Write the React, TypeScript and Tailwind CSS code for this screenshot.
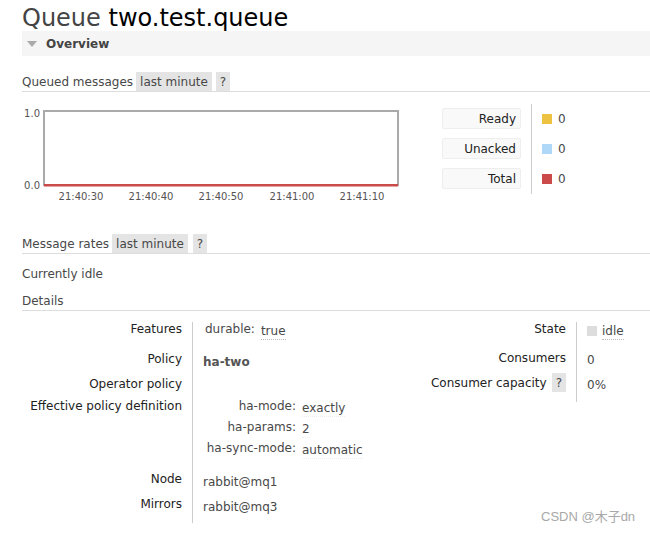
import React from "react";

function Chart() {
  const xs = [
    { x: 59, t: "21:40:30" },
    { x: 129, t: "21:40:40" },
    { x: 199, t: "21:40:50" },
    { x: 270, t: "21:41:00" },
    { x: 340, t: "21:41:10" },
  ];
  return (
    <svg width="390" height="100" viewBox="0 0 390 100" className="block shrink-0">
      <rect x="22" y="7" width="354" height="74" fill="#fff" stroke="#aaa" strokeWidth="2" />
      <rect x="22" y="80" width="354" height="2.5" fill="#cb4b4b" />
      <g fontFamily="DejaVu Sans, sans-serif" fontSize="10" fill="#545454">
        <text x="18" y="10" textAnchor="end" dominantBaseline="middle">1.0</text>
        <text x="18" y="82" textAnchor="end" dominantBaseline="middle">0.0</text>
        {xs.map((l) => (
          <text key={l.t} x={l.x} y="93" textAnchor="middle" dominantBaseline="middle">
            {l.t}
          </text>
        ))}
      </g>
    </svg>
  );
}

function LegendBox({ label }: { label: string }) {
  return (
    <div className="h-[21px] w-[79px] bg-[#f9f9f9] border border-[#eee] rounded-[2px] flex items-center justify-end pr-[4px] text-[#222]">
      {label}
    </div>
  );
}

function LegendVal({ color }: { color: string }) {
  return (
    <div className="h-[21px] flex items-center gap-[6px]">
      <span className={`w-[10px] h-[10px] ${color}`} />
      <span>0</span>
    </div>
  );
}

export default function App() {
  return (
    <div className="w-[650px] h-[533px] bg-white overflow-hidden relative text-[12px] leading-[14px] text-[#484848] font-['DejaVu_Sans',sans-serif]">
      <h1 className="pl-[22px] pt-[6px] h-[31px] text-[24px] leading-[24px] font-normal text-[#444]">
        Queue <span className="text-black">two.test.queue</span>
      </h1>
      <div className="ml-[22px] h-[25px] bg-[#f5f5f5] flex items-center">
        <span className="ml-[5px] w-0 h-0 border-l-[5px] border-r-[5px] border-t-[6px] border-l-transparent border-r-transparent border-t-[#aaa]" />
        <span className="ml-[9px] font-bold text-[#444]">Overview</span>
      </div>

      <div className="mt-[16px]">
        <div className="ml-[22px] h-[20px] border-b border-[#ddd] flex items-start">
          <span className="h-[19px] leading-[20px]">Queued messages</span>
          <span className="ml-[3px] h-[19px] leading-[20px] px-[4px] bg-[#e4e4e4]">last minute</span>
          <span className="ml-[4px] h-[19px] leading-[20px] px-[4px] bg-[#e4e4e4]">?</span>
        </div>
      </div>

      <div className="ml-[22px] mt-[12px] flex">
        <Chart />
        <div className="ml-[30px] flex">
          <div className="pt-[4px] flex flex-col gap-[9px]">
            <LegendBox label="Ready" />
            <LegendBox label="Unacked" />
            <LegendBox label="Total" />
          </div>
          <div className="ml-[10px] h-[90px] border-l border-[#ccc] pl-[10px] pt-[4px] flex flex-col gap-[9px]">
            <LegendVal color="bg-[#edc240]" />
            <LegendVal color="bg-[#afd8f8]" />
            <LegendVal color="bg-[#cb4b4b]" />
          </div>
        </div>
      </div>

      <div className="mt-[30px]">
        <div className="ml-[22px] h-[20px] border-b border-[#ddd] flex items-start">
          <span className="h-[19px] leading-[20px]">Message rates</span>
          <span className="ml-[3px] h-[19px] leading-[20px] px-[4px] bg-[#e4e4e4]">last minute</span>
          <span className="ml-[5px] h-[19px] leading-[20px] px-[4px] bg-[#e4e4e4]">?</span>
        </div>
      </div>

      <div className="ml-[22px] mt-[13px] h-[14px] leading-[15px]">Currently idle</div>
      <div className="ml-[22px] mt-[12px] h-[18px] leading-[17px] border-b border-[#ddd]">Details</div>

      <div className="ml-[22px] mt-[11px] flex">
        {/* left table */}
        <div className="w-[400px] flex">
          <div className="w-[160px] text-right text-[#222] flex flex-col leading-[15px]">
            <div className="h-[30px]">Features</div>
            <div className="h-[25px]">Policy</div>
            <div className="h-[22px]">Operator policy</div>
            <div className="h-[73px]">Effective policy definition</div>
            <div className="h-[25px]">Node</div>
            <div className="h-[26px]">Mirrors</div>
          </div>
          <div className="ml-[10px] border-l border-[#ccc] pl-[10px] flex flex-col leading-[15px]">
            <div className="h-[30px] flex items-start pl-[2px]">
              <span>durable:</span>
              <span className="ml-[6px] mt-[2px] border-b border-dotted border-[#bbb]">true</span>
            </div>
            <div className="h-[25px] pt-[3px] font-bold text-[#555]">ha-two</div>
            <div className="h-[22px]" />
            <div className="h-[73px] flex flex-col">
              {[
                ["ha-mode:", "exactly"],
                ["ha-params:", "2"],
                ["ha-sync-mode:", "automatic"],
              ].map(([k, v]) => (
                <div key={k} className="h-[21px] flex items-start">
                  <span className="w-[93px] text-right">{k}</span>
                  <span className="ml-[6px] mt-[2px] border-b border-dotted border-[#eee]">{v}</span>
                </div>
              ))}
            </div>
            <div className="h-[25px] pt-[3px]">rabbit@mq1</div>
            <div className="h-[26px] pt-[3px]">rabbit@mq3</div>
          </div>
        </div>
        {/* right table */}
        <div className="flex">
          <div className="w-[144px] text-right text-[#222] flex flex-col leading-[15px]">
            <div className="h-[29px]">State</div>
            <div className="h-[25px]">Consumers</div>
            <div className="h-[26px] flex items-start justify-end">
              <span>Consumer capacity</span>
              <span className="ml-[5px] -mt-[3px] h-[19px] leading-[20px] px-[4px] bg-[#e4e4e4] text-[#484848]">?</span>
            </div>
          </div>
          <div className="ml-[10px] h-[80px] border-l border-[#ccc] pl-[10px] flex flex-col leading-[15px]">
            <div className="h-[29px] flex items-start">
              <span className="mt-[4px] w-[10px] h-[10px] bg-[#ddd]" />
              <span className="ml-[5px] mt-[2px] border-b border-dotted border-[#bbb]">idle</span>
            </div>
            <div className="h-[25px] pt-[2px]">0</div>
            <div className="h-[26px] pt-[2px]">0%</div>
          </div>
        </div>
      </div>

      <div className="absolute left-[541px] top-[509px] text-[13px] leading-[16px] text-[#a8a8a8] font-['Liberation_Sans','Noto_Sans_CJK_SC',sans-serif]">
        CSDN @木子dn
      </div>
    </div>
  );
}
